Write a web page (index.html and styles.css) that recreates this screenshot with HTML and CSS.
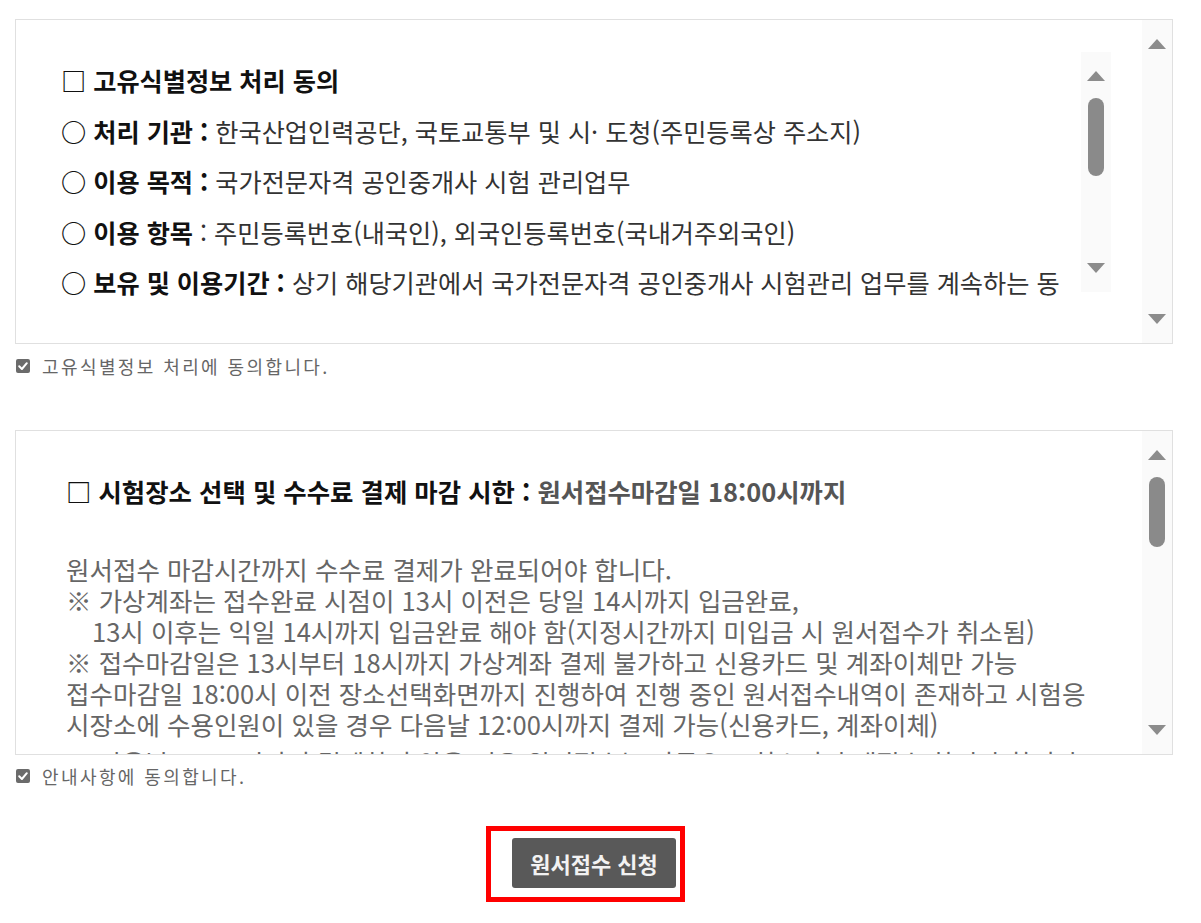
FILE: index.html
```html
<!DOCTYPE html>
<html lang="ko">
<head>
<meta charset="utf-8">
<title>원서접수</title>
<link rel="stylesheet" href="styles.css">
</head>
<body>
<div class="page">
  <div class="box box-1">
    <div class="box-main main-1">
      <div class="inner">
        <div class="inner-text">
          <div class="ln strong">□ 고유식별정보 처리 동의</div>
          <div class="ln"><b>○ 처리 기관 :</b> 한국산업인력공단, 국토교통부 및 시· 도청(주민등록상 주소지)</div>
          <div class="ln"><b>○ 이용 목적 :</b> 국가전문자격 공인중개사 시험 관리업무</div>
          <div class="ln"><b>○ 이용 항목</b> : 주민등록번호(내국인), 외국인등록번호(국내거주외국인)</div>
          <div class="ln"><b>○ 보유 및 이용기간 :</b> 상기 해당기관에서 국가전문자격 공인중개사 시험관리 업무를 계속하는 동</div>
        </div>
        <div class="sb">
          <div class="sb-btn up"><span class="tri-up"></span></div>
          <div class="sb-track"><div class="sb-thumb thumb-a"></div></div>
          <div class="sb-btn down"><span class="tri-down"></span></div>
        </div>
      </div>
    </div>
    <div class="sb">
      <div class="sb-btn up"><span class="tri-up"></span></div>
      <div class="sb-track"></div>
      <div class="sb-btn down"><span class="tri-down"></span></div>
    </div>
  </div>
  <label class="agree agree-1">
    <span class="chk"><svg viewBox="0 0 14 14" width="14" height="14"><path d="M3.2 7.3 L5.9 10 L10.8 4.2" fill="none" stroke="#fff" stroke-width="2" stroke-linecap="round" stroke-linejoin="round"/></svg></span>
    <span class="agree-text">고유식별정보 처리에 동의합니다.</span>
  </label>

  <div class="box box-2">
    <div class="box-main main-2">
      <div class="title-2"><span class="dark">□ 시험장소 선택 및 수수료 결제 마감 시한 :</span> <span class="grey">원서접수마감일 18:00시까지</span></div>
      <div class="body-2">
        <div>원서접수 마감시간까지 수수료 결제가 완료되어야 합니다.</div>
        <div>※ 가상계좌는 접수완료 시점이 13시 이전은 당일 14시까지 입금완료,</div>
        <div class="ind">13시 이후는 익일 14시까지 입금완료 해야 함(지정시간까지 미입금 시 원서접수가 취소됨)</div>
        <div>※ 접수마감일은 13시부터 18시까지 가상계좌 결제 불가하고 신용카드 및 계좌이체만 가능</div>
        <div>접수마감일 18:00시 이전 장소선택화면까지 진행하여 진행 중인 원서접수내역이 존재하고 시험응</div>
        <div>시장소에 수용인원이 있을 경우 다음날 12:00시까지 결제 가능(신용카드, 계좌이체)</div>
        <div class="more">※ 다음날 12:00시까지 결제하지 않을 경우 원서접수는 자동으로 취소되며 재접수 하셔야 합니다.</div>
      </div>
    </div>
    <div class="sb">
      <div class="sb-btn up"><span class="tri-up"></span></div>
      <div class="sb-track"><div class="sb-thumb thumb-b"></div></div>
      <div class="sb-btn down"><span class="tri-down"></span></div>
    </div>
  </div>
  <label class="agree agree-2">
    <span class="chk"><svg viewBox="0 0 14 14" width="14" height="14"><path d="M3.2 7.3 L5.9 10 L10.8 4.2" fill="none" stroke="#fff" stroke-width="2" stroke-linecap="round" stroke-linejoin="round"/></svg></span>
    <span class="agree-text">안내사항에 동의합니다.</span>
  </label>

  <div class="actions">
    <div class="btn-wrap">
      <button class="submit" type="button">원서접수 신청</button>
      <span class="highlight"></span>
    </div>
  </div>
</div>
</body>
</html>
```

FILE: styles.css
```css
* { box-sizing: border-box; }
html, body { margin: 0; padding: 0; background: #fff; }
body {
  font-family: "Noto Sans CJK KR", "Noto Sans", sans-serif;
  color: #333;
  min-height: 923px;
}
.page {
  width: 1158px;
  margin: 19px 0 0 15px;
  padding-bottom: 24px;
}
.box {
  display: flex;
  height: 325px;
  border: 1px solid #e0e0e0;
  background: #fff;
}
.box-main {
  flex: 1;
  min-width: 0;
  overflow: hidden;
}
.main-1 {
  padding: 32px 31px 0 45px;
}
.inner {
  display: flex;
  height: 240px;
}
.inner-text {
  flex: 1;
  min-width: 0;
  overflow-x: clip;
  overflow-y: visible;
  padding-top: 3px;
  font-size: 25.2px;
  line-height: 50.5px;
  color: #333;
  white-space: nowrap;
}
.inner-text b, .inner-text .strong {
  font-weight: 700;
  color: #111;
}

/* fake scrollbars */
.sb {
  flex: 0 0 30px;
  width: 30px;
  background: #fafafa;
  display: flex;
  flex-direction: column;
}
.sb-btn {
  height: 46px;
  flex: 0 0 46px;
  display: flex;
  justify-content: center;
}
.sb-btn.up { align-items: flex-start; padding-top: 19px; }
.sb-btn.down { align-items: flex-end; padding-bottom: 19px; }
.tri-up, .tri-down {
  width: 0;
  height: 0;
  border-left: 9px solid transparent;
  border-right: 9px solid transparent;
}
.tri-up { border-bottom: 10px solid #8c8c8c; }
.tri-down { border-top: 10px solid #8c8c8c; }
.sb-track {
  flex: 1;
  display: flex;
  justify-content: center;
  align-items: flex-start;
}
.sb-thumb {
  width: 16px;
  border-radius: 8px;
  background: #8a8a8a;
}
.thumb-a { height: 78px; }
.thumb-b { height: 70px; }

/* agree rows */
.agree {
  display: flex;
  align-items: center;
  height: 20px;
  padding-left: 1px;
}
.agree-1 { margin: 12px 0 54px; }
.agree-2 { margin: 11px 0 52px; }
.chk {
  width: 14px;
  height: 14px;
  border-radius: 2px;
  background: #6b6b6b;
  display: inline-flex;
}
.chk svg { display: block; }
.agree-text {
  margin-left: 12px;
  font-size: 18px;
  letter-spacing: 2.4px;
  color: #666;
}

/* box 2 */
.main-2 {
  padding: 45px 0 0 50px;
}
.title-2 {
  font-size: 25.4px;
  font-weight: 700;
  line-height: 31px;
  white-space: nowrap;
  margin-bottom: 46px;
}
.title-2 .dark { color: #111; }
.title-2 .grey { color: #555; }
.body-2 {
  font-size: 25.5px;
  line-height: 31px;
  color: #666;
  white-space: nowrap;
}
.body-2 .ind { padding-left: 26px; }
.body-2 .more { margin-top: 7px; }

/* action */
.actions {
  display: flex;
  justify-content: center;
}
.btn-wrap {
  position: relative;
}
.submit {
  display: block;
  width: 164px;
  height: 50px;
  border: 0;
  border-radius: 3px;
  background: #595959;
  color: #f2f2f2;
  font-family: "Noto Sans CJK KR", "Noto Sans", sans-serif;
  font-size: 22px;
  font-weight: 700;
  padding: 0;
}
.highlight {
  position: absolute;
  left: -26px;
  top: -12px;
  width: 199px;
  height: 76px;
  border: 5px solid #ff0000;
  pointer-events: none;
}
```
